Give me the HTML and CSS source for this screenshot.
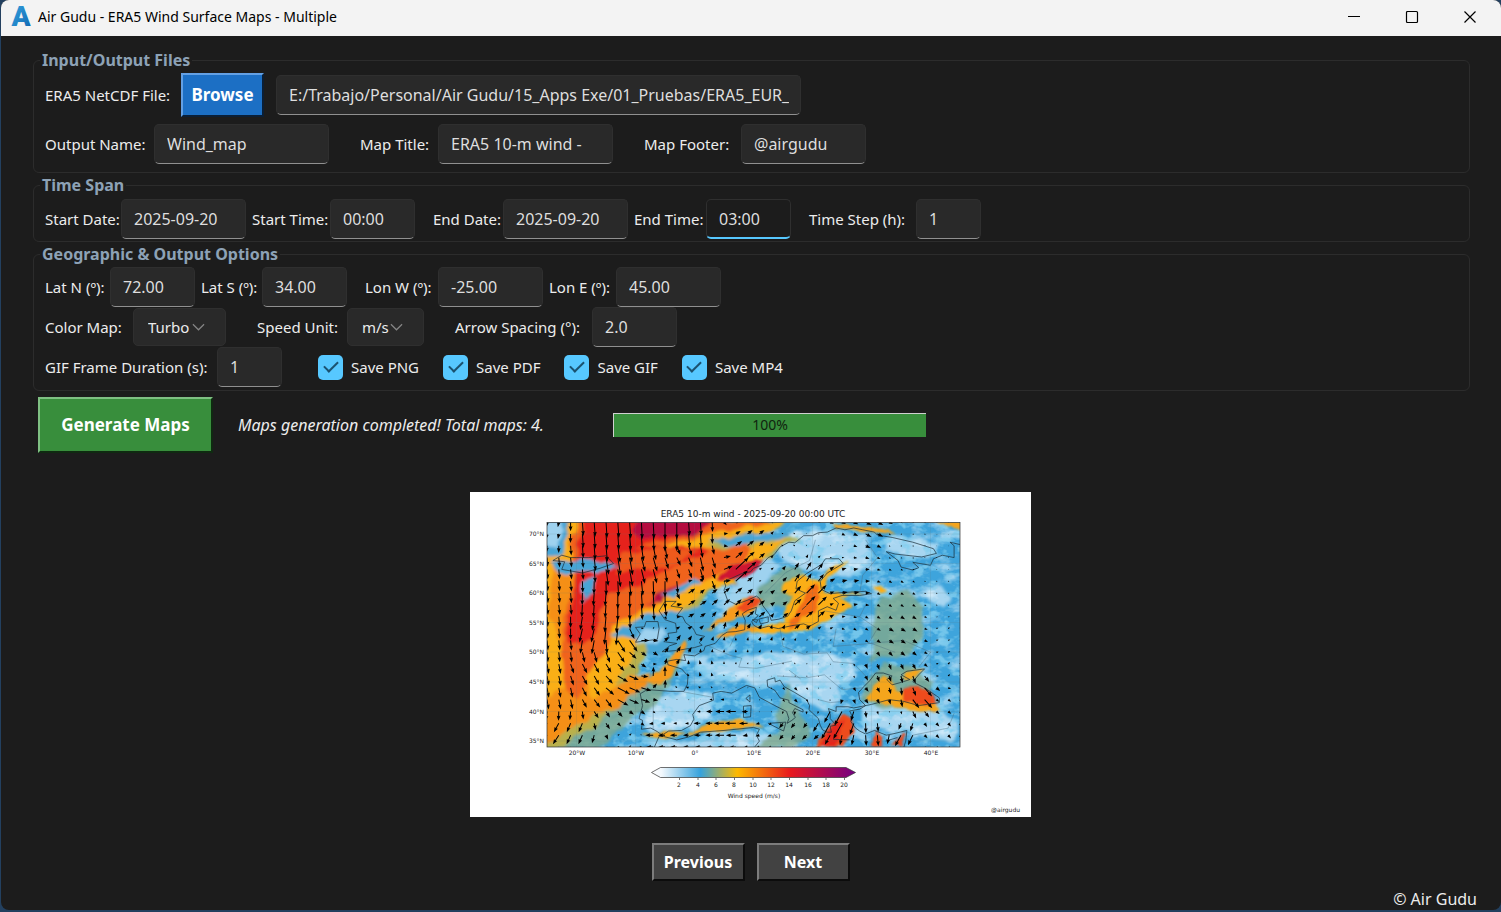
FILE: index.html
```html
<!DOCTYPE html>
<html lang="en">
<head>
<meta charset="utf-8">
<title>Air Gudu - ERA5 Wind Surface Maps - Multiple</title>
<link rel="stylesheet" href="styles.css">
</head>
<body>
<div class="window">
  <header class="titlebar">
    <svg class="logo" viewBox="0 0 24 36" aria-hidden="true">
      <defs><linearGradient id="logo-fill" x1="0" y1="0" x2="1" y2="1"><stop offset="0" stop-color="#3aa9e4"/><stop offset="1" stop-color="#0b62ad"/></linearGradient></defs>
      <text class="logo-letter" x="12" y="26" text-anchor="middle" fill="url(#logo-fill)">A</text>
    </svg>
    <h1 class="title">Air Gudu - ERA5 Wind Surface Maps - Multiple</h1>
    <div class="controls">
      <button class="control" aria-label="Minimize"><svg viewBox="0 0 14 14"><path d="M1 6.5h12"/></svg></button>
      <button class="control" aria-label="Maximize"><svg viewBox="0 0 14 14"><rect x="1.5" y="1.5" width="11" height="11" rx="1"/></svg></button>
      <button class="control" aria-label="Close"><svg viewBox="0 0 14 14"><path d="M1.5 1.5l11 11M12.5 1.5l-11 11"/></svg></button>
    </div>
  </header>

  <main class="content">
    <fieldset class="group group-files">
      <legend>Input/Output Files</legend>
      <div class="row row-files">
        <label class="w-136" for="file">ERA5 NetCDF File:</label>
        <button class="btn btn-blue">Browse</button>
        <input class="field file" id="file" value="E:/Trabajo/Personal/Air Gudu/15_Apps Exe/01_Pruebas/ERA5_EUR_">
      </div>
      <div class="row">
        <label class="w-109" for="out">Output Name:</label>
        <input class="field f-175 sp-31" id="out" value="Wind_map">
        <label class="w-78" for="maptitle">Map Title:</label>
        <input class="field f-175 sp-31" id="maptitle" value="ERA5 10-m wind -">
        <label class="w-97" for="mapfoot">Map Footer:</label>
        <input class="field f-125" id="mapfoot" value="@airgudu">
      </div>
    </fieldset>

    <fieldset class="group group-time">
      <legend>Time Span</legend>
      <div class="row">
        <label class="w-76" for="sd">Start Date:</label>
        <input class="field f-125 sp-6" id="sd" value="2025-09-20">
        <label class="w-78" for="st">Start Time:</label>
        <input class="field f-85 sp-18" id="st" value="00:00">
        <label class="w-70" for="ed">End Date:</label>
        <input class="field f-125 sp-6" id="ed" value="2025-09-20">
        <label class="w-72" for="et">End Time:</label>
        <input class="field f-85 sp-18 active" id="et" value="03:00">
        <label class="w-107" for="step">Time Step (h):</label>
        <input class="field f-65" id="step" value="1">
      </div>
    </fieldset>

    <fieldset class="group group-geo">
      <legend>Geographic &amp; Output Options</legend>
      <div class="row">
        <label class="w-65" for="ln">Lat N (º):</label>
        <input class="field f-85 sp-6" id="ln" value="72.00">
        <label class="w-61" for="ls">Lat S (º):</label>
        <input class="field f-85 sp-18" id="ls" value="34.00">
        <label class="w-73" for="lw">Lon W (º):</label>
        <input class="field f-105 sp-6" id="lw" value="-25.00">
        <label class="w-67" for="le">Lon E (º):</label>
        <input class="field f-105" id="le" value="45.00">
      </div>
      <div class="row">
        <label class="w-88" for="cmap">Color Map:</label>
        <span class="pick f-93 sp-31"><select id="cmap"><option>Turbo</option></select><svg viewBox="0 0 14 8"><path d="M1 1l6 6 6-6"/></svg></span>
        <label class="w-90" for="unit">Speed Unit:</label>
        <span class="pick f-77 sp-31"><select id="unit"><option>m/s</option></select><svg viewBox="0 0 14 8"><path d="M1 1l6 6 6-6"/></svg></span>
        <label class="w-137" for="arrow">Arrow Spacing (°):</label>
        <input class="field f-85" id="arrow" value="2.0">
      </div>
      <div class="row">
        <label class="w-172" for="gif">GIF Frame Duration (s):</label>
        <input class="field f-65 sp-36" id="gif" value="1">
        <div class="checks">
          <label class="check"><input type="checkbox" checked>Save PNG</label>
          <label class="check"><input type="checkbox" checked>Save PDF</label>
          <label class="check"><input type="checkbox" checked>Save GIF</label>
          <label class="check"><input type="checkbox" checked>Save MP4</label>
        </div>
      </div>
    </fieldset>

    <div class="run">
      <button class="btn btn-green">Generate Maps</button>
      <p class="status">Maps generation completed! Total maps: 4.</p>
      <div class="progress" role="progressbar" aria-valuenow="100" aria-valuemin="0" aria-valuemax="100" aria-label="Progress"><div class="progress-bar" style="width:100%">100%</div></div>
    </div>

    <figure class="preview">
      <svg class="map" viewBox="470 492 561 325" role="img" aria-label="Wind map">
        <defs>
          <clipPath id="frame"><rect x="547" y="522.500" width="413" height="224.500"/></clipPath>
          <filter id="soft" x="-5%" y="-5%" width="110%" height="110%">
            <feTurbulence type="fractalNoise" baseFrequency="0.05" numOctaves="3" seed="4" result="n"/>
            <feDisplacementMap in="SourceGraphic" in2="n" scale="14" xChannelSelector="R" yChannelSelector="G"/>
            <feGaussianBlur stdDeviation="1.800"/>
          </filter>
          <filter id="fine" x="-5%" y="-5%" width="110%" height="110%">
            <feTurbulence type="fractalNoise" baseFrequency="0.12" numOctaves="2" seed="8" result="n"/>
            <feDisplacementMap in="SourceGraphic" in2="n" scale="6" xChannelSelector="R" yChannelSelector="G"/>
            <feGaussianBlur stdDeviation="0.900"/>
          </filter>
          <filter id="mottle" x="0" y="0" width="100%" height="100%">
            <feTurbulence type="fractalNoise" baseFrequency="0.045 0.07" numOctaves="4" seed="11"/>
            <feColorMatrix values="0 0 0 0 .82  0 0 0 0 .93  0 0 0 0 1  3.400 0 0 0 -1.650"/>
          </filter>
          <filter id="vein" x="0" y="0" width="100%" height="100%">
            <feTurbulence type="fractalNoise" baseFrequency="0.08 0.11" numOctaves="3" seed="23"/>
            <feColorMatrix values="0 0 0 0 .22  0 0 0 0 .62  0 0 0 0 .86  0 5 0 0 -2.600"/>
          </filter>
          <linearGradient id="scale" x1="0" x2="1"><stop offset="0" stop-color="#fff"/><stop offset=".05" stop-color="#f2f8fd"/><stop offset=".24" stop-color="#36a2dc"/><stop offset=".42" stop-color="#fdb900"/><stop offset=".68" stop-color="#e8191e"/><stop offset="1" stop-color="#730083"/></linearGradient>
        </defs>
        <rect x="470" y="492" width="561" height="325" fill="#fff"/>
        <g clip-path="url(#frame)">
          <rect x="547" y="522" width="413" height="225" fill="#3ea4dc"/>
          <g filter="url(#soft)" fill="#b4dcf3" opacity=".9">
            <path d="M775 548l25-14 30-3 35 6 5 25-20 15-25-10-25 3-15-8z"/>
            <path d="M885 540l25-4 28 8-5 12-25 2-22-6zM925 585l15-5 12 18-8 12-18-8z"/>
            <path d="M648 700l40-6 28 3-3 12-18 22-40 4-11-8z"/>
            <path d="M700 662l38-3 30-7 50 0 30 8 8 15-18 10 3 15-12 10-22-5-18-20-32 2-25-10-32-4z"/>
            <path d="M862 705l30-5 40 8 25 12-5 22-60-12-30 0zM650 738l40 4 60-10 40 4 10 14H660zM676 655l20-8 14 3-6 12-24 3z"/>
          </g>
          <rect x="547" y="522" width="413" height="225" filter="url(#mottle)" opacity=".55"/>
          <rect x="547" y="522" width="413" height="225" filter="url(#vein)" opacity=".8"/>
          <g filter="url(#soft)">
            <path fill="#7fa98c" opacity=".8" d="M880 596l28-3 15 14 0 30-14 18-40 3 5-30zM872 676l14-12 24 6 26 12-10 25-46-2-18-5zM780 730l-5-18 15-28 10 30 10 20-15 16h-40zM755 590l25-22 20 0 15 20-20 18-30 4-10-6zM640 690l30-30 14-6-18 30-10 20-20 10-34 34H547V720z"/>
            <path fill="#b9b04c" d="M547 545l20 10 60-5 90-15 60 0 25 6-20 8-12 10-20 12-30 6-14 16-10 20-14 16-30 20-14 20-24 42-30 22-30 18H547z"/>
            <path fill="#faaf12" d="M567 518H800l-30 12-45 8-24 8 35 2 54-8-20 14-20 14-16 12-30 14-26 16-34 10-10 20-5 20-16 32-16 20-28 16-22 18-40 8V600l5-30 8-24z"/>
            <path fill="#f58f18" d="M556 562l20 0 10 34-8 50 14 55 40-25 20-5-12 24-40 20-24 10-30 22V700l25-15-10-40-12-30z"/>
            <path fill="#f0631a" d="M577 518H775l-20 8-55 10-45 12 40 2 54-9 6 4-10 20-30 12-35 15-25 12-38 18-8 24-14 18-16 34-12-8-6-30 4-35 8-45-1-35z"/>
            <path fill="#e5231e" d="M584 518H730l-30 13-40 10-30 8 50-3 20 1 10 3-10 8-34 10-32 20-26 7-8 22-6 26-14 4-14-8 8-40 0-30 4-25z"/>
            <path fill="#ee5a1b" d="M620 556l50-9 30 4-20 12-40 6-26 4z"/>
            <path fill="#b5103f" d="M640 518H722l-26 14-55 7-8-8zM648 602l30-17 4 4-22 13z"/>
            <path fill="#46a5d6" d="M541 518h24l5 20-10 16-17 3zM552 563l28-4 38 5-24 8-34 1zM582 582l12-6-4 20-8 4zM704 541l58-7 44-9-20 14-50 5zM662 597l34-18 6 3-28 16zM613 632l32-17 55-9 16 24-8 22-42 3-18 3-4-16z"/>
            <path fill="#9ed2ef" d="M541 518h20l4 16-11 12-9-3zM730 583l18-9 20-14 10 4-16 20-8 20-18 10-12-9zM633 643l10-13 22-5 3 8-13 12z"/>
          </g>
          <g filter="url(#fine)">
            <path fill="#fbae12" d="M822 582c2-12 14-18 27-21l-18 15-8 12 2 5 40 0-25 4 14 9-18 9-24 14-44 5-24-4 24-4 16-4 2-16 8-10-12-4 2-9 17-8zM874 588l8-3 6 6-8 3z"/>
            <path fill="#f36d18" d="M803 600l6-14 8-3 2 14-2 14-16 6-6 10-8 1z"/>
            <path fill="#f5a51c" d="M866 700l9-16 7-9 9 4 6 13 12-2 10 5 15 8 8 8-24 1-30-7zM902 678l4-7 18-3-8 8-9 5zM690 733l18-10 28-4 28 7-32 4-30 2-17 6zM640 735l30-4 16 2-20 6zM832 524l50 4 14 6-22-2-38-3zM930 520h34v10z"/>
            <path fill="#ee4c1c" d="M903 688l16-1 12 6 7 11-13 3-22-7zM815 747l18-25 10-8 9 5 2 14-12 14zM870 746l7-16 7 17zM892 745l13-12-4 14z"/>
            <path fill="#e5281d" d="M820 746l16-24 9-2-10 26z"/>
            <path fill="#f79b1a" d="M646 680l19-14 20-26 3 5-20 35-14 6zM727 612l12-12 22-2-6 14-36 12-16 8zM716 638l24-14 20 3-30 10z"/>
            <path fill="#ee4c1c" d="M736 608l15-11 10 2-5 8-14 6z"/>
            <path fill="#cf1230" d="M716 580l16-15 32-6-10 14-20 6z"/>
          </g>
          <g class="coast" transform="translate(694.500 948.300) scale(5.900 -5.920)">
            <path d="M-9 37L-8.800 38.500-9.400 38.800-8.800 41-9.200 43-8 43.700-4 43.400-1.800 43.400-1.200 44.600-1.100 46-2.200 47.200-4.500 47.900-4.600 48.500-3 48.800-1.500 48.600-1.800 49.600 0 49.400 1.600 50.300 1.800 51 3.500 51.500 4.600 52.800 5.500 53.400 7 53.500 8.500 53.800 8.600 55.400 8.100 56.500 9 57.100 10.500 57.600 10.300 56.500 10.800 56.200 9.700 55.200 10 54.600 11 54 12.500 54.400 14.200 54 16.500 54.500 18.500 54.800 19.500 54.400 21 55.200 21 57 22.500 57.700 24 57.100 24.400 58.300 23.500 59.100 25 59.600 28 59.600 30 59.900 29 60.300 25 60.100 23 59.900 21.500 60.600 21.300 62 22.500 63.400 25.200 65 24.500 65.800 22.200 65.800 21.500 64.800 19 63.300 17.400 62 17.200 60.700 18.800 60 17 58.700 16.400 57 15.800 56.100 14.300 55.600 13 55.400 12.700 56.400 11.500 58 11 59.100 10.500 59.500 9 58.800 7 58.100 5.600 58.800 5 60.500 5.300 61.200 5 62 6.500 62.600 8 63.300 9.500 63.600 10 64.200 11.300 64.700 12.500 66 13.500 66.500 14.500 67.800 16 68.600 17 68.500 18.500 69.700 20 69.700 21 70.200 22.500 70.300 24 71 25.500 70.700 27 71 28.500 70.700 30.500 70.300 31 69.800 33.500 69.400 37 68.600 40.500 67.500 41 66.700 38.500 66.100 34 66.600 32.500 67 34.500 65.500 35 64.400 37 63.900 38 64.300 37 65.200 40 64.700 40.500 65.800 42 66.400 44 66 44 68 43.300 68.600 45 68.200"/>
            <path d="M-9 37L-7.400 37.200-6.300 36.600-5.500 36-4.400 36.700-2.200 36.800-.7 37.600-.1 38.700-.3 39.500 .8 41 3.200 41.900 3.100 43.100 4.500 43.400 6.300 43.100 8.800 44.400 10.200 44 11 42.400 12.300 41.700 14 40.800 15.600 40 16 38.800 15.700 38 16.500 38.500 17.100 39 16.600 39.800 17 40.500 18.400 39.900 18.400 40.300 16 41.500 16 41.900 14.500 42.300 13.600 43.600 12.400 44.200 12.300 45.300 13.600 45.700 13.700 45 14.500 45.300 15.200 44.200 17 43.200 19 42 19.500 41 19.400 40.300 21 38.800 21.300 37.700 21.700 36.900 22.500 36.500 23.200 36.500 23 37.500 24 37.700 23 38.800 23 39.500 22.700 40.500 24 40 24 40.800 26 40.800 27 40.600 29 41 28 42 27.800 43.200 28.700 44.200 29.700 45.200 30.700 46.500 32 46.500 33.500 46 32.600 45.400 33.500 44.500 35.300 45 36.500 45.400 35 46.200 36 46.800 39 47.200 38 46.200 37 45 39 44 41.500 42.300 41.500 41.500 38 41 35.500 41.700 33 42 30 41.200 29 41 28 40.400 26.300 40.100 26.800 39 26.500 38.300 27.300 37.200 28 36.700 29 36.200 30.500 36.800 32.500 36 34 36.300 36 36.800 35.800 35 35.500 34"/>
            <path d="M-6.800 34L-6 35.800-5.300 35.800-3 35.200-1 35.700 1 36.500 5 36.800 10 37.300 11 37 10.500 36 11 35 10.200 34M-5.500 50.100L-3 50.300 0 50.800 1.300 51.200 .8 51.600 1.700 52.700 .3 53-.2 54-1.500 55-2 56-3 56.200-2 57.500-4 57.800-3.100 58.600-5 58.600-6 57-5 55.500-3.200 54.900-3 53.400-4.500 53.200-4.300 52.400-5.200 51.800-3 51.500-4.200 51.100zM-10 51.700L-6.300 52.200-6 54-6.200 55.200-8.200 55.200-8.500 54.300-10 54.200-9.200 53.100zM-24 65.500L-22 65.300-22.500 64-19 63.400-16 64.200-13.700 65-15 66.300-18 66-21 66-22.500 66.400z"/>
            <path d="M8.300 39l1.200 .1 .1 1.900-1.300-.1zM8.700 42.200l.7 .6 0-1.200zM12.500 38l3 .2-.4-1.500zM23.500 35.300l2.800-.1M32.400 35l2 .6M10.900 55.600l1.600 .4 0-.9-1.300-.3zM9.800 55.500l.9 0-.2-.5zM18.200 57.200l.8 .7"/>
            <g class="border"><path d="M-1.800 43.300L3.100 42.400M2.500 51L6 49.500 8 49 7.500 47.500 10.500 47.300 13 47.800 16.500 48.500M7 53L6 51M14.500 54L15 51 18.500 49.700 22.500 49.900 23.500 48.400 27 48.100 29 46M24 54L23.500 51 30 51.500 34 50M28 56L31 54 29.500 51.500 35.500 52 40 50 38 47.500M28 60L28.500 63 31 66 29 69M20.500 69L19.500 65.500 15.500 63.500 12 60M14 46L19 45.700 22 46.200 25 43.700 28.500 44M21 42L23 41.500 26 41.800M37 36L43 37.200 44 39.700M22 57L28 56 29 58M-7 37L-7 41.500M16 47L18 45.500"/></g>
          </g>
          <g class="grid"><path d="M576.500 522v225M635.500 522v225M694.500 522v225M753.500 522v225M812.500 522v225M871.500 522v225M930.500 522v225M547 534h413M547 563.500h413M547 593h413M547 622.500h413M547 652h413M547 682h413M547 711.500h413M547 741h413"/></g>
          <g id="arrows"></g>
        </g>
        <rect class="axis" x="547" y="522.500" width="413" height="224.500"/>
        <text class="map-title" x="753" y="517" text-anchor="middle">ERA5 10-m wind - 2025-09-20 00:00 UTC</text>
        <g class="tick" text-anchor="end">
          <text x="544" y="536">70°N</text><text x="544" y="566">65°N</text><text x="544" y="595">60°N</text><text x="544" y="625">55°N</text><text x="544" y="654">50°N</text><text x="544" y="684">45°N</text><text x="544" y="714">40°N</text><text x="544" y="743">35°N</text>
        </g>
        <g class="tick" text-anchor="middle">
          <text x="577" y="755">20°W</text><text x="636" y="755">10°W</text><text x="695" y="755">0°</text><text x="754" y="755">10°E</text><text x="813" y="755">20°E</text><text x="872" y="755">30°E</text><text x="931" y="755">40°E</text>
          <text x="679" y="787">2</text><text x="698" y="787">4</text><text x="716" y="787">6</text><text x="734" y="787">8</text><text x="753" y="787">10</text><text x="771" y="787">12</text><text x="789" y="787">14</text><text x="808" y="787">16</text><text x="826" y="787">18</text><text x="844" y="787">20</text>
          <text x="754" y="798">Wind speed (m/s)</text>
        </g>
        <path class="bar" d="M651.500 772.500l9-5H846l9.500 5-9.500 5H660.500z" fill="url(#scale)"/>
        <path class="axis" d="M679.500 778v2M698 778v2M716 778v2M734.500 778v2M753 778v2M771 778v2M789.500 778v2M808 778v2M826 778v2M844.500 778v2"/>
        <text class="tick" x="1020" y="812" text-anchor="end">@airgudu</text>
      </svg>
    </figure>

    <nav class="pager">
      <button class="btn btn-gray">Previous</button>
      <button class="btn btn-gray">Next</button>
    </nav>
  </main>
  <footer class="copyright">© Air Gudu</footer>
</div>
<script src="map.js"></script>
</body>
</html>
```
FILE: styles.css
```css
* { box-sizing: border-box; }
body {
  margin: 0;
  background: #23405f;
  color: #ececec;
  font: 15px/22px "Noto Sans", "Open Sans", sans-serif;
}
.window {
  min-height: calc(100vh - 2px);
  margin: 0 0 2px 1px;
  background: #1c1c1c;
  border-radius: 8px;
  overflow: hidden;
  display: flex;
  flex-direction: column;
}
.titlebar {
  height: 36px;
  flex: none;
  display: flex;
  align-items: center;
  background: #f3f3f3;
  color: #000;
  padding: 0 2px 0 8px;
}
.logo { width: 24px; height: 36px; margin-right: 5px; }
.logo-letter { font: 900 28px/28px Roboto, sans-serif; }
.title { margin: 0; font-size: 14px; line-height: 20px; font-weight: 400; flex: 1; padding-bottom: 2px; }
.controls { display: flex; height: 100%; }
.control {
  width: 58px;
  border: 0;
  padding: 0 0 2px;
  background: none;
  display: flex;
  align-items: center;
  justify-content: center;
}
.control svg { width: 14px; height: 14px; fill: none; stroke: #000; stroke-width: 1.2; }
.content { padding: 13px 31px 0 32px; flex: 1; }
.group {
  margin: 0 0 1px;
  min-width: 0;
  border: 1px solid #2c2c2c;
  border-radius: 6px;
  padding: 2px 11px 8px;
}
.group legend {
  margin-left: -5px;
  padding: 0 2px;
  font-size: 16px;
  line-height: 22px;
  font-weight: 700;
  color: #8da2b6;
}
.group-time { padding: 3px 11px 2px; }
.group-geo { padding: 2px 11px 3px; }
.row { display: flex; align-items: center; min-height: 40px; }
.row label { flex: none; white-space: nowrap; }
.row-files { margin-bottom: 7px; }
.field {
  min-width: 0;
  height: 40px;
  border: 1px solid #2f2f2f;
  border-bottom-color: #909090;
  border-radius: 5px;
  padding: 0 11px 0 12px;
  background: #292929;
  color: #dedede;
  font: inherit;
  font-size: 16px;
  outline: 0;
}
.field.active { background: #1c1c1c; border-bottom: 2px solid #57c8ff; }
.file { width: 525px; }
.f-65 { width: 65px; }
.f-77 { width: 77px; }
.f-85 { width: 85px; }
.f-93 { width: 93px; }
.f-105 { width: 105px; }
.f-125 { width: 125px; }
.f-175 { width: 175px; }
.sp-6 { margin-right: 6px; }
.sp-18 { margin-right: 18px; }
.sp-31 { margin-right: 31px; }
.sp-36 { margin-right: 36px; }
.w-61 { width: 61px; }
.w-65 { width: 65px; }
.w-67 { width: 67px; }
.w-70 { width: 70px; }
.w-72 { width: 72px; }
.w-73 { width: 73px; }
.w-76 { width: 76px; }
.w-78 { width: 78px; }
.w-88 { width: 88px; }
.w-90 { width: 90px; }
.w-97 { width: 97px; }
.w-107 { width: 107px; }
.w-109 { width: 109px; }
.w-136 { width: 136px; }
.w-137 { width: 137px; }
.w-172 { width: 172px; }
.pick { position: relative; height: 38px; }
.pick select {
  appearance: none;
  width: 100%;
  height: 100%;
  padding: 0 14px;
  border: 1px solid #2f2f2f;
  border-radius: 5px;
  background: #292929;
  color: #ececec;
  font: inherit;
}
.pick svg {
  position: absolute;
  right: 21px;
  top: 15px;
  width: 13px;
  height: 8px;
  fill: none;
  stroke: #858585;
  stroke-width: 1.3;
  pointer-events: none;
}
.checks { display: flex; gap: 24px; }
.check { display: flex; align-items: center; gap: 8px; }
.check input {
  appearance: none;
  width: 25px;
  height: 25px;
  margin: 0;
  border-radius: 5px;
  background: #57c8ff;
  display: grid;
  place-items: center;
}
.check input::before {
  content: "";
  width: 12px;
  height: 6px;
  margin-bottom: 4px;
  border: solid #1b5270;
  border-width: 0 0 2px 2px;
  transform: rotate(-45deg);
}
.btn {
  font: inherit;
  font-weight: 700;
  color: #fff;
  white-space: nowrap;
  padding: 0;
  border: 2px solid;
}
.btn-blue {
  width: 83px;
  height: 44px;
  font-size: 17px;
  margin-right: 12px;
  background: #1c6fc4;
  border-color: #63a0e4 #0b1f36 #0b1f36 #63a0e4;
}
.btn-green {
  width: 175px;
  height: 56px;
  font-size: 17px;
  background: #388e3c;
  border-color: #7fc083 #0f2a11 #0f2a11 #7fc083;
}
.btn-gray {
  width: 93px;
  height: 38px;
  font-size: 16px;
  background: #424242;
  border-color: #7c7c7c #0c0c0c #0c0c0c #7c7c7c;
}
.run { display: flex; align-items: center; margin: 6px 0 0 5px; }
.status { margin: 0 0 0 25px; width: 375px; font-size: 16px; font-style: italic; }
.progress {
  width: 313px;
  height: 24px;
  border: solid #d0d0d0;
  border-width: 1px 0 0 1px;
}
.progress-bar { height: 100%; background: #388e3c; color: #10240f; text-align: center; font-size: 14px; }
.preview { margin: 39px 2px 0 0; display: flex; justify-content: center; }
.map { width: 561px; height: 325px; display: block; }
.map text { font-family: "DejaVu Sans", sans-serif; fill: #222; }
.map .map-title { font-size: 9px; }
.map .tick { font-size: 6px; }
.axis { fill: none; stroke: #333; stroke-width: 0.7; }
.bar { stroke: #333; stroke-width: 0.7; }
.coast path { fill: none; stroke: #182c38; stroke-width: 0.7; vector-effect: non-scaling-stroke; stroke-linejoin: round; }
.coast .border path { stroke: #48697c; stroke-width: 0.4; }
.grid path { fill: none; stroke: #5c7780; stroke-width: 0.3; opacity: 0.5; }
#arrows { fill: #000; stroke: #000; }
.pager { display: flex; justify-content: center; gap: 12px; margin: 26px 2px 0 0; }
.copyright { padding: 0 24px 0 0; text-align: right; font-size: 16px; line-height: 21px; }
```
FILE: map.js
```js
// Wind samples: x, y, dx, dy (drawing units)
const samples = [
  [560,530,-1,5],[582,530,1,14],[606,530,1,16],[640,530,1,17],[670,530,0,18],[700,530,1,14],[715,530,0,10],[730,532,5,-3],
  [752,530,5,-4],[570,560,1,10],[620,560,3,18],[650,560,4,14],[680,555,4,8],[700,560,3,14],[712,575,3,10],[735,572,13,-12],[742,555,7,-6],
  [560,600,1,10],[600,600,-1,13],[620,600,0,16],[650,600,1,16],[665,585,0,16],[690,600,7,-5],[720,600,6,-6],[700,585,4,-4],
  [560,640,1,10],[590,630,-3,14],[615,625,-2,17],[625,640,8,12],[640,642,8,0],[645,655,5,4],[660,678,0,-10],[650,625,1,-2],[675,650,4,-6],
  [590,670,5,9],[620,690,12,6],[640,690,10,3],[600,700,6,8],[560,690,2,10],[552,738,-6,9],[580,730,-4,9],[605,715,4,6],
  [640,715,4,3],[630,735,2,-2],[655,735,-8,0],[670,735,-7,0],[735,722,-11,0],[705,722,-7,0],[760,735,-4,1],[670,710,1,0],[690,705,1,1],[690,690,-3,-1],
  [700,670,-1,-4],[730,625,2,-7],[750,610,7,-6],[735,645,0,-3],[810,600,9,-9],[805,580,5,-8],[790,620,6,-4],[770,600,4,-3],[775,630,1,-4],
  [790,545,-2,-1],[830,540,1,0],[840,525,4,2],[870,527,6,3],[900,540,1,1],[760,580,2,-1],[845,592,6,-1],[900,635,5,3],[890,600,3,2],
  [860,630,3,2],[940,560,1,0],[950,600,1,1],[950,630,2,-1],[840,600,3,-1],[880,675,2,6],[865,690,3,4],[905,690,1,8],[920,695,8,9],[940,700,3,2],
  [836,722,-9,16],[845,738,-2,10],[818,742,-5,4],[875,733,1,11],[903,735,-6,11],[930,735,3,3],[890,718,1,1],
  [795,698,3,3],[790,725,-4,5],[770,705,1,1],[790,655,0,-2],[840,680,0,1],[820,700,0,1],[745,690,1,0],[815,650,1,-1],[950,670,2,-2]
];

function windAt(x, y) {
  let sum = 0, u = 0, v = 0;
  for (const [sx, sy, dx, dy] of samples) {
    const w = 1 / Math.pow((x - sx) ** 2 + (y - sy) ** 2 + 8, 2);
    sum += w; u += w * dx; v += w * dy;
  }
  return [u / sum, v / sum];
}

function arrow(x, y) {
  const [u, v] = windAt(x, y);
  const len = Math.max(Math.hypot(u, v), 0.8);
  const angle = Math.atan2(v, u) * 180 / Math.PI;
  const head = Math.min(5, len);
  const half = head * 0.38;
  const base = len - head;
  return `<path stroke="none" transform="translate(${x.toFixed(1)} ${y.toFixed(1)}) rotate(${angle.toFixed(0)})" d="M0 -.5H${base + 0.5}L${base} ${-half}L${len} 0L${base} ${half}L${base + 0.5} .5H0z"/>`;
}

let marks = "";
for (let row = 0; row < 20; row++) {
  for (let col = 0; col < 36; col++) marks += arrow(547 + col * 11.8, 747 - row * 11.84);
}
document.getElementById("arrows").innerHTML = marks;
```
